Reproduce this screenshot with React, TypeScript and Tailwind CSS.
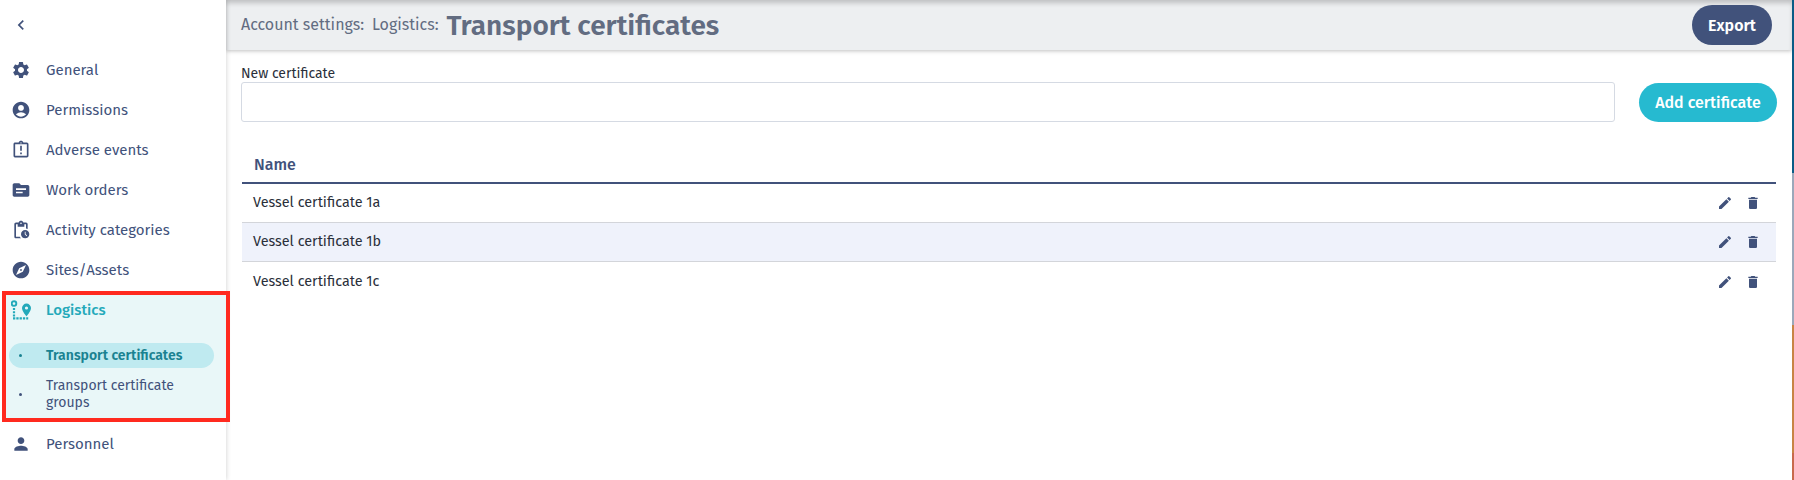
import {
  MdAccountCircle,
  MdChevronLeft,
  MdDelete,
  MdEdit,
  MdExplore,
  MdOutlineAssignmentLate,
  MdOutlinePendingActions,
  MdPerson,
  MdSettings,
  MdSource,
} from "react-icons/md";

const topItems = [
  { label: "General", icon: MdSettings },
  { label: "Permissions", icon: MdAccountCircle },
  { label: "Adverse events", icon: MdOutlineAssignmentLate },
  { label: "Work orders", icon: MdSource },
  { label: "Activity categories", icon: MdOutlinePendingActions },
  { label: "Sites/Assets", icon: MdExplore },
];

const certificates = ["Vessel certificate 1a", "Vessel certificate 1b", "Vessel certificate 1c"];

function RouteIcon() {
  return (
    <svg className="w-5 h-5 shrink-0" viewBox="0 0 20 20" fill="none">
      <circle cx="3" cy="3.6" r="2.3" stroke="currentColor" strokeWidth="1.9" />
      <path d="M3 8V17" stroke="currentColor" strokeWidth="2.2" strokeDasharray="2.100 1.100" />
      <path d="M2 18.4H17.200" stroke="currentColor" strokeWidth="2.4" strokeDasharray="2.3 1" />
      <path
        d="M15.5 3.6a4.500 4.500 0 0 0-4.500 4.500c0 3.300 4.500 8.300 4.500 8.300s4.500-5 4.500-8.300a4.500 4.500 0 0 0-4.500-4.500zm0 6a1.600 1.600 0 1 1 0-3.200 1.600 1.600 0 0 1 0 3.200z"
        fill="currentColor"
      />
    </svg>
  );
}

function Sidebar() {
  return (
    <nav className="relative z-10 w-[226px] shrink-0 bg-white text-[15px] text-[#41527b] shadow-[0_0_5px_rgba(0,0,0,0.2)]">
      <div className="h-[49px] mb-px pl-[11px] flex items-center">
        <MdChevronLeft className="w-5 h-5" />
      </div>
      {topItems.map(({ label, icon: Icon }) => (
        <a key={label} href="#" className="h-10 pl-[11px] flex items-center gap-[15px]">
          <Icon className="w-5 h-5 shrink-0" />
          <span>{label}</span>
        </a>
      ))}
      <div className="ml-[2px] mt-px w-[228px] h-[131px] border-4 border-[#ff2a1f] bg-[#e9f7f8]">
        <a href="#" className="h-[30px] pl-[5px] flex items-center gap-[15px] font-medium text-[#23a9ba]">
          <RouteIcon />
          <span>Logistics</span>
        </a>
        <a
          href="#"
          className="ml-[3px] mt-[18px] w-[205px] h-[25px] rounded-full bg-[#bfeaf0] flex items-center text-sm font-semibold text-[#1a8291]"
        >
          <span className="ml-[10px] w-[3px] h-[3px] rounded-full bg-[#1a8291]" />
          <span className="ml-6">Transport certificates</span>
        </a>
        <a href="#" className="mt-[9px] pl-[13px] flex items-center text-[14px] leading-[17px]">
          <span className="w-[3px] h-[3px] rounded-full bg-[#41527b]" />
          <span className="ml-6 w-[140px]">Transport certificate groups</span>
        </a>
      </div>
      <a href="#" className="h-10 mt-[2px] pl-[11px] flex items-center gap-[15px]">
        <MdPerson className="w-5 h-5" />
        <span>Personnel</span>
      </a>
    </nav>
  );
}

function Header() {
  return (
    <header className="h-[50px] pl-[15px] pr-5 bg-[#edeff1] flex items-center justify-between shadow-[inset_0_4px_5px_-1px_rgba(0,0,0,0.2),0_1px_4px_rgba(0,0,0,0.25)]">
      <div className="flex items-center gap-2 text-base text-[#626c81]">
        <span>Account settings:</span>
        <span>Logistics:</span>
        <h1 className="pt-px text-[28px] leading-8 font-semibold">Transport certificates</h1>
      </div>
      <button className="w-20 h-10 pt-px rounded-full bg-[#41527b] text-white text-base font-semibold">
        Export
      </button>
    </header>
  );
}

export default function App() {
  return (
    <div className="h-[480px] flex overflow-hidden bg-white [font-family:'Fira_Sans','Noto_Sans',sans-serif]">
      <Sidebar />
      <main className="flex-1">
        <Header />
        <div className="px-[15px] flex items-end justify-between">
          <label className="block pt-[15px] text-[14px] leading-[17px] text-[#2a2f3a]">
            New certificate
            <input className="block w-[1374px] h-10 rounded-[3px] border border-[#d5dae3] bg-white" />
          </label>
          <button className="w-[138px] h-[39px] rounded-full bg-[#26bad0] text-white text-base font-medium">
            Add certificate
          </button>
        </div>
        <div className="mt-[19px] ml-4 w-[1534px] text-[#2a2f3a]">
          <div className="h-[43px] pl-3 pt-[7px] flex items-center border-b-2 border-[#41527b] text-base font-medium text-[#41527b]">
            Name
          </div>
          <div>
            {certificates.map((name) => (
              <div
                key={name}
                className="h-[39px] pl-[11px] pr-[15px] flex items-center justify-between border-b border-[#d3d5da] text-[14.4px] even:bg-[#eff2fb] last:border-b-0"
              >
                <span>{name}</span>
                <div className="flex gap-3 text-[#41527b]">
                  <MdEdit className="w-4 h-4" />
                  <MdDelete className="w-4 h-4" />
                </div>
              </div>
            ))}
          </div>
        </div>
      </main>
      <div className="w-[2px] flex flex-col">
        <div className="h-[173px] bg-[#0a5c86]" />
        <div className="h-[152px] bg-[#9ba8ba]" />
        <div className="h-[128px] bg-[#c88445]" />
        <div className="flex-1 bg-[#c8694c]" />
      </div>
    </div>
  );
}
